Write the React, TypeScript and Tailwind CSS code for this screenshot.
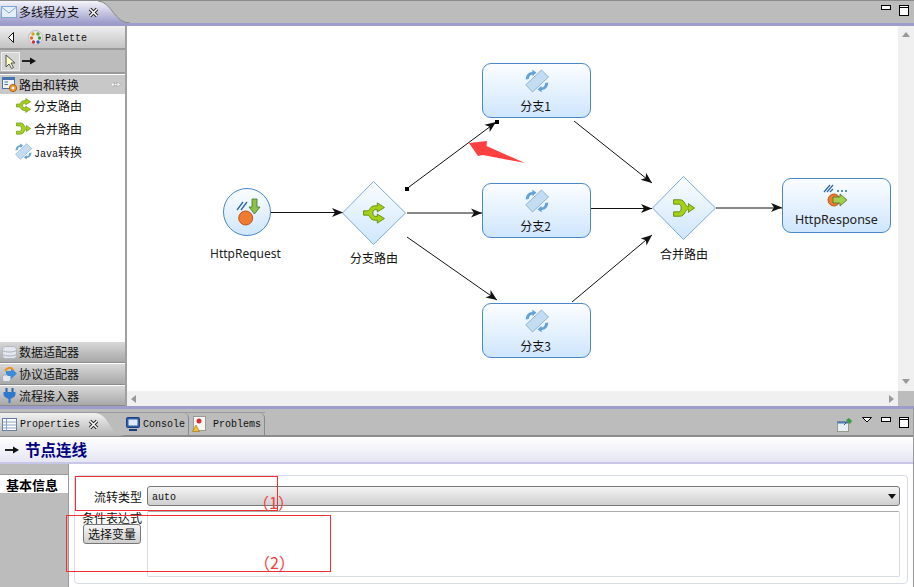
import React from "react";

const Arrowhead = ({ x, y, a }: { x: number; y: number; a: number }) => (
  <polygon points="0,0 -11,-4.5 -8,0 -11,4.5" fill="#111" transform={`translate(${x} ${y}) rotate(${a})`} />
);

const Line = ({ d, w = 1 }: { d: string; w?: number }) => <path d={d} stroke="#111" strokeWidth={w} fill="none" />;

const JavaIcon = ({ size = 24 }: { size?: number }) => (
  <svg width={size} height={size} viewBox="0 0 24 24">
    <path d="M16.5 1 L23.5 8 L7.5 23 L0.8 15.8 Z" fill="#c4dcf2" stroke="#8db4d8" />
    <path d="M0.8 10.5 C0.8 6 3.5 3 7.5 3 L7.2 0.8 L11.5 3.6 L7.6 7.2 L7.5 5.4 C5.2 5.6 4 7.5 3.8 10 Z" fill="#62a2d8" />
    <path d="M23.2 13.5 C23.2 18 20.5 21 16.5 21 L16.8 23.2 L12.5 20.4 L16.4 16.8 L16.5 18.6 C18.8 18.4 20 16.5 20.2 14 Z" fill="#62a2d8" />
  </svg>
);

const SplitIcon = ({ size = 20 }: { size?: number }) => (
  <svg width={size} height={size} viewBox="0 0 20 20">
    <path d="M0.5 8 H4.5 C6 8 6.5 3.5 10.5 3.5 H13 V0.8 L19.5 5 L13 9 V7 H11 C9.5 7 9 8.5 9 10 C9 11.5 9.5 13 11 13 H13 V11 L19.5 15 L13 19.2 V16.5 H10.5 C6.5 16.5 6 12 4.5 12 H0.5 Z" fill="#a4d018" stroke="#5c8a08" strokeWidth="0.8" />
  </svg>
);

const MergeIcon = ({ size = 20 }: { size?: number }) => (
  <svg width={size} height={size} viewBox="0 0 20 20">
    <path d="M0.5 2.5 H6.5 C11 2.5 11 9 14 9 V6 L19.5 10 L14 14 V11 C11 11 11 17.5 6.5 17.5 H0.5 V13.5 H5.5 C8 13.5 8 6.5 5.5 6.5 H0.5 Z" fill="#a4d018" stroke="#5c8a08" strokeWidth="0.8" />
  </svg>
);

const MiniArrow = () => (
  <svg width="15" height="8" viewBox="0 0 15 8">
    <path d="M0 4 H9" stroke="#222" strokeWidth="2" />
    <path d="M8 0.5 L14 4 L8 7.5 Z" fill="#111" />
  </svg>
);

const WinButtons = () => (
  <div className="flex items-start gap-[8px]">
    <div className="h-[5px] w-[10px] border border-black bg-white" />
    <div className="h-[11px] w-[10px] border border-black bg-white pt-[1px]">
      <div className="h-[1px] w-full bg-black" />
    </div>
  </div>
);

const Close = () => (
  <svg width="11" height="11" viewBox="0 0 11 11">
    <path d="M2 2 L9 9 M9 2 L2 9" stroke="#222" strokeWidth="3.4" />
    <path d="M2 2 L9 9 M9 2 L2 9" stroke="#fff" strokeWidth="1.6" />
  </svg>
);

const DiagramBox = ({ left, top, label, icon, large }: { left: number; top: number; label: string; icon?: React.ReactNode; large?: boolean }) => (
  <div
    className="absolute flex h-[55px] w-[109px] flex-col items-center rounded-[9px] border border-[#4a88c7] bg-gradient-to-b from-[#fbfdff] to-[#cfe6fd]"
    style={{ left, top }}
  >
    <div className="mt-[4px] flex h-[26px] items-center">{icon ?? <JavaIcon />}</div>
    <span className={large ? "mt-[3px] text-[12.5px] leading-[16px] text-[#222] font-['Noto_Sans',sans-serif]" : "mr-[2px] mt-[4px] text-[12px] leading-[16px] text-[#111]"}>{label}</span>
  </div>
);

const GroupRow = ({ icon, label, h }: { icon: React.ReactNode; label: string; h: string }) => (
  <div className={`flex ${h} items-center gap-[2px] border-t border-b border-t-white border-b-[#8c8c8c] bg-gradient-to-b from-[#d8d8d8] to-[#a8a8a8] pl-[2px] text-[12px] text-[#111]`}>
    {icon}
    <span>{label}</span>
  </div>
);

const PaletteItem = ({ icon, label }: { icon: React.ReactNode; label: React.ReactNode }) => (
  <div className="flex h-[23px] items-center gap-[2px] pl-[15px] text-[12px] text-[#111]">
    <div className="flex w-[17px] justify-center">{icon}</div>
    <span>{label}</span>
  </div>
);

export default function App() {
  return (
    <div className="relative flex h-[587px] w-[914px] flex-col overflow-hidden bg-white font-['Noto_Sans_CJK_SC',sans-serif]">
      {/* Editor tab bar */}
      <div className="flex h-[26px] items-start justify-between border-t border-b-[3px] border-t-[#8a8a8a] border-b-[#9d9dcb] bg-[#bcbcbc]">
        <div className="relative flex h-[22px] w-[131px] items-center">
          <svg className="absolute left-0 top-0" width="131" height="22" viewBox="0 0 131 22">
            <defs>
              <linearGradient id="tabg" x1="0" y1="0" x2="0" y2="1">
                <stop offset="0" stopColor="#f4f4fb" />
                <stop offset="1" stopColor="#9d9dcb" />
              </linearGradient>
            </defs>
            <path d="M0 0 H98 C112 1 114 22 130 22 H0 Z" fill="url(#tabg)" />
            <path d="M98 0 C112 1 114 22 130 22" stroke="#888" fill="none" />
          </svg>
          <div className="relative flex items-center pl-[1px] text-[12px] text-[#111]">
            <svg width="16" height="12" viewBox="0 0 16 12">
              <rect x="0.5" y="0.5" width="15" height="11" fill="#e4effa" stroke="#7fa8d0" />
              <path d="M0.5 1 L8 7 L15.5 1" stroke="#7fa8d0" fill="none" />
            </svg>
            <span className="ml-[2px] w-[69px]">多线程分支</span>
            <Close />
          </div>
        </div>
        <div className="mr-[5px] mt-[4px]"><WinButtons /></div>
      </div>

      {/* Editor body */}
      <div className="flex h-[380px]">
        {/* Palette */}
        <div className="flex w-[127px] flex-col border-r-2 border-[#a0a0a0]">
          <div className="flex h-[24px] items-center border-b-2 border-[#9a9a9a] bg-gradient-to-b from-[#f0f0f0] to-[#c4c4c4] pl-[8px]">
            <svg width="6" height="11" viewBox="0 0 6 11"><path d="M5.5 0.5 L0.5 5.5 L5.5 10.5 Z" fill="#fff" stroke="#111" /></svg>
            <svg className="ml-[14px]" width="15" height="15" viewBox="0 0 15 15">
              <circle cx="7.5" cy="7.5" r="7" fill="#e9e9f0" stroke="#b8b8c8" />
              <circle cx="5" cy="4" r="1.7" fill="#d9a514" /><circle cx="10" cy="4" r="1.7" fill="#5da82c" />
              <circle cx="3.5" cy="8" r="1.7" fill="#e66b1e" /><circle cx="11.5" cy="8" r="1.7" fill="#2e9d3c" />
              <circle cx="5.5" cy="12" r="1.7" fill="#d03030" /><circle cx="10" cy="12" r="1.7" fill="#2a5fc0" />
            </svg>
            <span className="ml-[2px] mt-[2px] font-['Liberation_Mono',monospace] text-[10px] text-[#111]">Palette</span>
          </div>
          <div className="flex h-[24px] items-center border-b-2 border-[#9a9a9a] bg-[#bcbcbc] pl-[1px]">
            <div className="flex h-[19px] w-[19px] items-center justify-center border border-[#eee] bg-[#d6d6d6]">
              <svg width="11" height="15" viewBox="0 0 11 15"><path d="M1 1 L1 13 L4 10 L6.5 14.5 L8.5 13.5 L6 9 L10 9 Z" fill="#fdfdc8" stroke="#555" /></svg>
            </div>
            <span className="ml-[2px] flex"><MiniArrow /></span>
          </div>
          <div className="flex h-[20px] items-center justify-between border-t border-white bg-[#c8c8c8] pl-[2px] pr-[4px] text-[12px] text-[#111]">
            <div className="flex items-center gap-[1px]">
              <svg width="16" height="16" viewBox="0 0 16 16">
                <rect x="0.5" y="0.5" width="12" height="11" fill="#eef3fb" stroke="#4a74b0" />
                <rect x="0.5" y="0.5" width="12" height="2.5" fill="#4a74b0" />
                <path d="M2.5 5 H6 M2.5 7.5 H6" stroke="#4a74b0" />
                <circle cx="11" cy="11" r="3.6" fill="#f0a030" stroke="#b85a10" />
                <circle cx="11" cy="11" r="1.3" fill="#fff" />
              </svg>
              <span>路由和转换</span>
            </div>
            <svg width="11" height="7" viewBox="0 0 11 7"><path d="M0.5 3.5 L4 1 V6 Z M10.5 3.5 L7 1 V6 Z M4 2.5 H7 V4.5 H4 Z" fill="#fff" stroke="#999" strokeWidth="0.5" /></svg>
          </div>
          <PaletteItem icon={<SplitIcon size={15} />} label="分支路由" />
          <PaletteItem icon={<MergeIcon size={15} />} label="合并路由" />
          <PaletteItem
            icon={<JavaIcon size={17} />}
            label={
              <span className="relative top-[1px]">
                <span className="font-['Liberation_Mono',monospace] text-[10px]">Java</span>转换
              </span>
            }
          />
          <div className="flex-1" />
          <GroupRow
            h="h-[22px]"
            label="数据适配器"
            icon={
              <svg width="15" height="15" viewBox="0 0 15 15">
                <rect x="0.5" y="1.5" width="14" height="12" rx="3" fill="#e4e8ee" stroke="#b0b8c2" />
                <path d="M0.5 5.5 C4 7.5 11 7.5 14.5 5.5 M0.5 9.5 C4 11.5 11 11.5 14.5 9.5" stroke="#a8b0bc" fill="none" />
              </svg>
            }
          />
          <GroupRow
            h="h-[22px]"
            label="协议适配器"
            icon={
              <svg width="15" height="15" viewBox="0 0 15 15">
                <rect x="0.5" y="8" width="8" height="6.5" rx="2" fill="#e4e8ee" stroke="#a8b0bc" />
                <path d="M4 7 V4 H9 V1 L15 6.5 L9 12 V9 H6 Z" fill="#3f8bd8" />
                <path d="M3 4 C5 0 10 0 11 3" stroke="#f09020" strokeWidth="2" fill="none" />
              </svg>
            }
          />
          <GroupRow
            h="h-[21px]"
            label="流程接入器"
            icon={
              <svg width="15" height="15" viewBox="0 0 15 15">
                <path d="M4.5 0 V4 M10.5 0 V4" stroke="#2a62b0" strokeWidth="2" />
                <path d="M1.5 4 H13.5 V6 C13.5 9 10 10 8.5 11 V15 H6.5 V11 C5 10 1.5 9 1.5 6 Z" fill="#2f78cc" />
              </svg>
            }
          />
        </div>

        {/* Canvas + scrollbars */}
        <div className="flex flex-1 flex-col">
          <div className="flex h-[365px]">
            <div className="relative flex-1 overflow-hidden bg-white">
              <svg className="absolute left-0 top-0" width="771" height="365" viewBox="127 26 771 365">
                <Line d="M271 212.5 H343" w={1.2} /><Arrowhead x={343} y={212.5} a={0} />
                <Line d="M407 213 H482" w={1.2} /><Arrowhead x={482} y={213} a={0} />
                <Line d="M591 208.5 H652" w={1.2} /><Arrowhead x={652} y={208.5} a={0} />
                <Line d="M716 208 H782" w={1.2} /><Arrowhead x={782} y={207.5} a={0} />
                <Line d="M409 187 L495 123" /><Arrowhead x={496} y={122} a={-36} />
                <Line d="M574 121 L652 183" /><Arrowhead x={652} y={183} a={38} />
                <Line d="M407 237 L497 300" /><Arrowhead x={497} y={300} a={35} />
                <Line d="M572 302 L652 235" /><Arrowhead x={652} y={235} a={-40} />
                <rect x="405" y="187" width="4" height="4" fill="#000" />
                <rect x="495" y="120" width="4" height="4" fill="#000" />
                <polygon points="469,143 487,141 486.5,146 525,163 483,155 478,156" fill="#ff4040" />
                <defs>
                  <linearGradient id="nodeg" x1="0" y1="0" x2="0" y2="1">
                    <stop offset="0" stopColor="#fbfdff" />
                    <stop offset="1" stopColor="#cfe6fd" />
                  </linearGradient>
                </defs>
                <circle cx="247" cy="212" r="23.5" fill="url(#nodeg)" stroke="#4a88c7" />
                <path d="M237 210 L243 202 M241 210 L247 202" stroke="#2a6aa8" strokeWidth="1.3" />
                <circle cx="245.7" cy="218" r="7" fill="#ee7b30" stroke="#c0541a" />
                <path d="M252 199 H257 V207 H260 L254.5 214 L249 207 H252 Z" fill="#8ec04a" stroke="#3c7a2a" strokeWidth="0.8" />
                <polygon points="373.5,181.5 405.5,213 373.5,244.5 342.5,213" fill="url(#nodeg)" stroke="#7ea9d8" />
                <polygon points="683.5,176.5 715.5,208 683.5,239.5 652.5,208" fill="url(#nodeg)" stroke="#7ea9d8" />
              </svg>
              <div className="absolute left-[236px] top-[176px]"><SplitIcon size={22} /></div>
              <div className="absolute left-[546px] top-[171px]"><MergeIcon size={22} /></div>
              <span className="absolute left-[83px] top-[220px] text-[12px] leading-[16px] text-[#222] font-['Noto_Sans',sans-serif]">HttpRequest</span>
              <span className="absolute left-[223px] top-[224px] text-[12px] leading-[16px] text-[#111]">分支路由</span>
              <span className="absolute left-[533px] top-[220px] text-[12px] leading-[16px] text-[#111]">合并路由</span>
              <DiagramBox left={355} top={37} label="分支1" />
              <DiagramBox left={355} top={157} label="分支2" />
              <DiagramBox left={355} top={277} label="分支3" />
              <DiagramBox
                left={655}
                top={152}
                label="HttpResponse"
                large
                icon={
                  <svg width="30" height="26" viewBox="0 0 30 26">
                    <path d="M2 9 L8 2 M5 9 L11 2 M8 9 L11 6" stroke="#2a6aa8" strokeWidth="1.2" />
                    <circle cx="16" cy="8" r="1" fill="#2a6aa8" /><circle cx="20" cy="8" r="1" fill="#2a6aa8" /><circle cx="24" cy="8" r="1" fill="#2a6aa8" />
                    <circle cx="12" cy="17" r="6" fill="#ee7b30" stroke="#c0541a" />
                    <path d="M11 14 H18 V11 L25 17 L18 23 V20 H11 Z" fill="#a4d050" stroke="#3c7a2a" strokeWidth="0.8" />
                  </svg>
                }
              />
            </div>
            <div className="flex w-[16px] flex-col items-center justify-between bg-[#f0f0f0] pb-[6px] pt-[5px]">
              <svg width="10" height="6" viewBox="0 0 10 6"><path d="M1 6 H9 L5 1 Z" fill="#999" /></svg>
              <svg width="10" height="6" viewBox="0 0 10 6"><path d="M1 0 H9 L5 5 Z" fill="#999" /></svg>
            </div>
          </div>
          <div className="flex h-[15px]">
            <div className="flex flex-1 items-center justify-between bg-[#f0f0f0] px-[4px]">
              <svg width="5" height="8" viewBox="0 0 5 8"><path d="M5 0 V8 L0 4 Z" fill="#999" /></svg>
              <svg width="5" height="8" viewBox="0 0 5 8"><path d="M0 0 V8 L5 4 Z" fill="#999" /></svg>
            </div>
            <div className="w-[16px] bg-[#bcbcbc]" />
          </div>
        </div>
      </div>

      {/* Properties view */}
      <div className="flex min-h-0 flex-1 flex-col border-t-[3px] border-r border-t-[#9d9dcb] border-r-[#999]">
        <div className="flex h-[28px] items-start justify-between border-b-2 border-[#8c8c8c] bg-[#bcbcbc] pt-[3px]">
          <div className="flex h-[23px] items-center border-t border-[#9a9a9a] font-['Liberation_Mono','Noto_Sans_CJK_SC',monospace] text-[10px] text-[#111]">
            <div className="relative flex h-[23px] w-[125px] items-center">
              <svg className="absolute left-0 top-0" width="125" height="23" viewBox="0 0 125 23">
                <defs>
                  <linearGradient id="ptab" x1="0" y1="0" x2="0" y2="1">
                    <stop offset="0" stopColor="#f2f2f2" />
                    <stop offset="1" stopColor="#b4b4b4" />
                  </linearGradient>
                </defs>
                <path d="M0 0 H95 C110 1 108 21 125 23 H0 Z" fill="url(#ptab)" />
              </svg>
              <div className="relative flex items-center pl-[2px]">
                <svg width="15" height="13" viewBox="0 0 15 13">
                  <rect x="0.5" y="0.5" width="14" height="12" fill="#fff" stroke="#6a7a9a" />
                  <path d="M0.5 4 H14.5 M0.5 7 H14.5 M0.5 10 H14.5 M4.5 1 V13" stroke="#8aa0c0" />
                </svg>
                <span className="ml-[3px] w-[68px]">Properties</span>
                <Close />
              </div>
            </div>
            <div className="flex h-[23px] w-[64px] items-center rounded-tr-[5px] border-r border-[#8a8a8a] pl-[1px]">
              <svg width="14" height="14" viewBox="0 0 14 14">
                <rect x="0.5" y="0.5" width="13" height="10" rx="1" fill="#2f5fa8" stroke="#1d3d78" />
                <rect x="2.5" y="2.5" width="9" height="6" fill="#dfe8f5" />
                <path d="M3 13 H11" stroke="#1d3d78" strokeWidth="2" />
              </svg>
              <span className="ml-[3px]">Console</span>
            </div>
            <div className="flex h-[23px] w-[76px] items-center rounded-tr-[5px] border-r border-[#8a8a8a] pl-[3px]">
              <svg width="15" height="16" viewBox="0 0 15 16">
                <rect x="1.5" y="0.5" width="12" height="14" fill="#f6f6f6" stroke="#9a9a9a" />
                <circle cx="7" cy="5" r="2.5" fill="#d83030" />
                <path d="M4 9 L7.5 15.5 H0.5 Z" fill="#f0c030" stroke="#a07010" strokeWidth="0.6" />
              </svg>
              <span className="ml-[6px]">Problems</span>
            </div>
          </div>
          <div className="mr-[4px] mt-[5px] flex items-start gap-[9px]">
            <svg className="mr-[1px] mt-[1px]" width="15" height="14" viewBox="0 0 15 14">
              <rect x="0.5" y="3.5" width="11" height="10" fill="#e8eef6" stroke="#9a9a8a" />
              <path d="M0.5 3.5 H11.5 V5.5 H0.5 Z" fill="#4a7ab8" />
              <path d="M7 7 L10 4" stroke="#555" />
              <path d="M9 2 L12 0 L15 3 L13 6 Z" fill="#2ea03c" />
            </svg>
            <svg width="10" height="6" viewBox="0 0 10 6"><path d="M0.5 0.5 H9.5 L5 5 Z" fill="#fff" stroke="#000" /></svg>
            <WinButtons />
          </div>
        </div>
        <div className="flex h-[27px] items-center border-b-2 border-[#c8c8e6] bg-gradient-to-b from-white to-[#e6e6f4] pl-[5px]">
          <MiniArrow />
          <span className="ml-[5px] text-[15.5px] font-bold text-[#000080]">节点连线</span>
        </div>
        <div className="relative flex min-h-0 flex-1">
          <div className="w-[69px] border-r border-[#999] bg-[#bcbcbc] pt-[10px]">
            <div className="flex h-[19px] items-center border-t border-[#999] bg-white pl-[6px] text-[13px] font-bold leading-none text-black">基本信息</div>
          </div>
          <div className="flex-1 pl-[5px] pr-[5px] pt-[11px]">
            <div className="h-[109px] rounded-[4px] border border-[#d8dce8] pl-[7px] pr-[7px] pt-[10px]">
              <div className="flex items-center text-[12px] text-[#111]">
                <span className="w-[60px] pt-[2px] text-right">流转类型</span>
                <div className="ml-[5px] flex h-[20px] flex-1 items-center justify-between rounded-[3px] border border-[#777] bg-gradient-to-b from-[#f4f4f4] to-[#cfcfcf] pl-[4px] pr-[3px] font-['Liberation_Mono',monospace] text-[10px]">
                  <span className="pt-[2px]">auto</span>
                  <svg width="8" height="5" viewBox="0 0 8 5"><path d="M0 0 H8 L4 5 Z" fill="#111" /></svg>
                </div>
              </div>
              <div className="mt-[5px] flex text-[12px] text-[#111]">
                <div className="flex w-[60px] flex-col items-end">
                  <span className="leading-[13px]">条件表达式</span>
                  <div className="mr-[1px] flex h-[20px] w-[58px] items-center justify-center rounded-[3px] border border-[#777] bg-gradient-to-b from-[#f6f6f6] to-[#cfcfcf] leading-none">选择变量</div>
                </div>
                <div className="ml-[5px] h-[66px] flex-1 rounded-[2px] border border-[#d8dce8] border-t-[#aaaaaa] bg-white" />
              </div>
            </div>
          </div>
          {/* Red annotations */}
          <div className="absolute left-[75px] top-[12px] h-[35px] w-[203px] border border-[#f03030]" />
          <div className="absolute left-[66px] top-[51px] h-[57px] w-[265px] border border-[#f03030]" />
          <span className="absolute left-[253px] top-[29px] text-[16px] leading-[18px] text-[#f04040]">（1）</span>
          <span className="absolute left-[254px] top-[89px] text-[16px] leading-[18px] text-[#f04040]">（2）</span>
        </div>
      </div>
    </div>
  );
}
